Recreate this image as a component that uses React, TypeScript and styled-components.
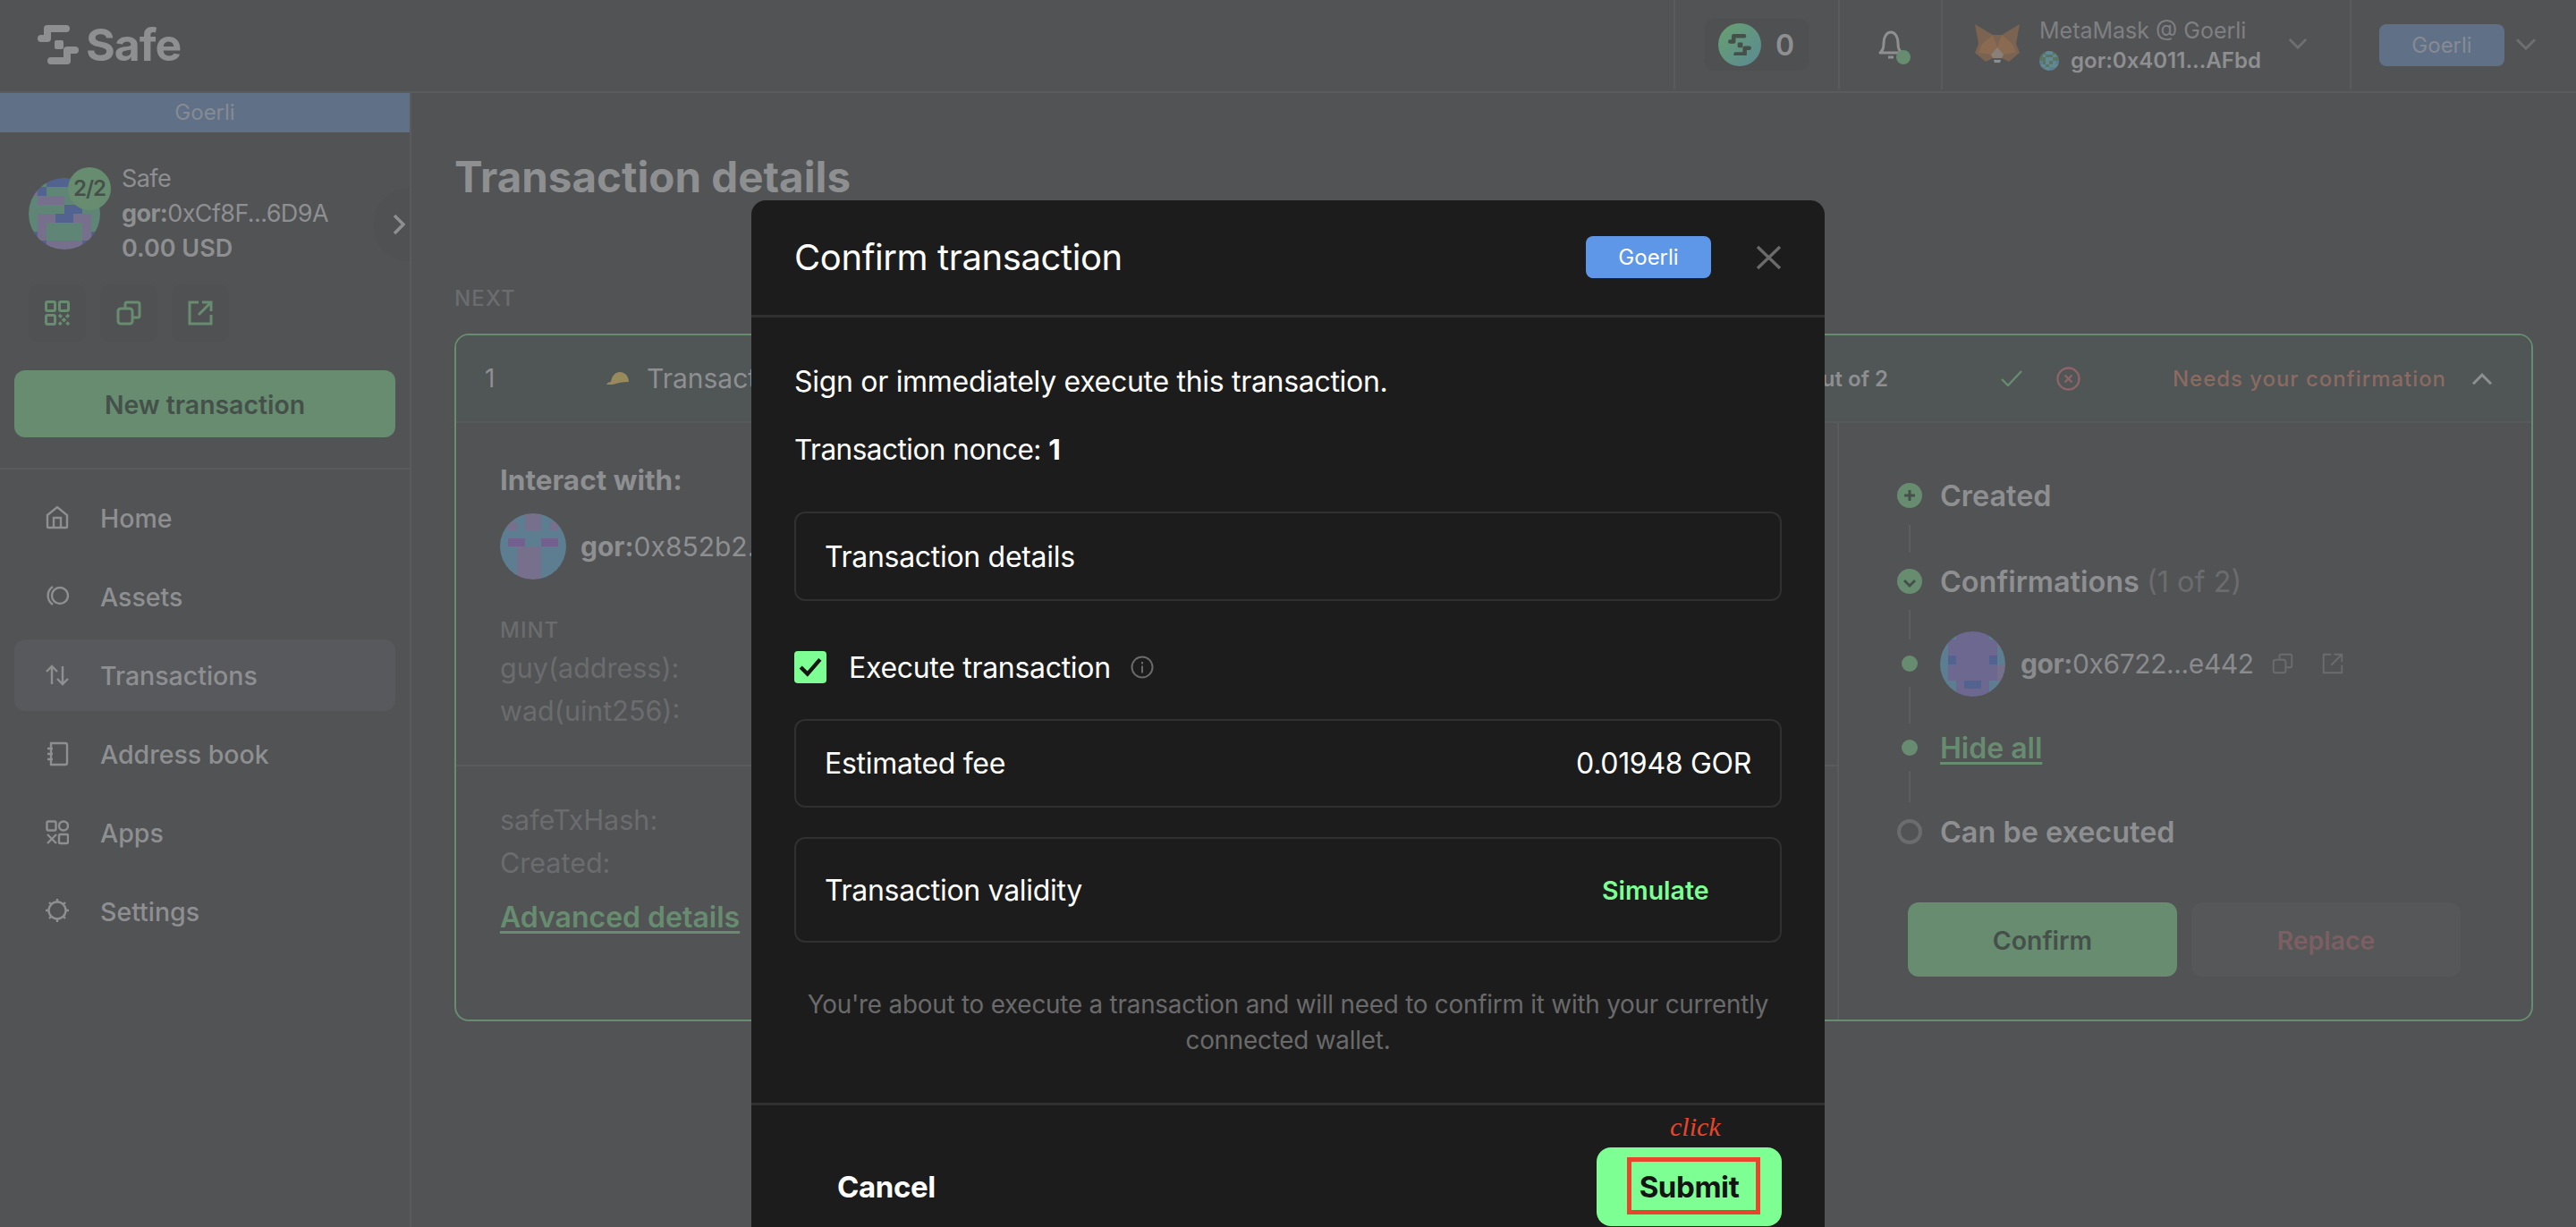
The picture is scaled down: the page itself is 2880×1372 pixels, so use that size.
import React from 'react'
import styled, { createGlobalStyle } from 'styled-components'

const GlobalStyle = createGlobalStyle`
  html, body {
    margin: 0;
    padding: 0;
    background: #525355;
    font-family: Inter, "Open Sans", sans-serif;
  }
  * { box-sizing: border-box; }
`

const TEXT = '#8e8f91'
const FAINT = '#6b6c6e'
const GREEN = '#678c70'
const LINE = '#5a5b5d'

function SafeLogo({ size = 46, color = TEXT }: { size?: number; color?: string }) {
  return (
    <svg width={size} height={size * 44 / 46} viewBox="0 0 46 44" fill="none" stroke={color} strokeWidth="8" strokeLinecap="round" strokeLinejoin="round">
      <path d="M4 15H11V4H32" />
      <path d="M15 40H33V28H42" />
      <rect x="19" y="17" width="10" height="10" rx="2" fill={color} stroke="none" />
    </svg>
  )
}

// blocky identicons, one char per cell
const palette: Record<string, string> = {
  g: '#5f8576', p: '#77708c', b: '#536390', s: '#5d7d90', v: '#74608f', d: '#6d6890', t: '#5f8a94', k: '#5c7560',
}

function PixelAvatar({ rows, size }: { rows: string[]; size: number }) {
  const n = rows.length
  return (
    <AvatarSvg width={size} height={size} viewBox={`0 0 ${n} ${n}`} shapeRendering="crispEdges">
      {rows.map((row, y) =>
        row.split('').map((c, x) => <rect key={`${x}-${y}`} x={x} y={y} width="1" height="1" fill={palette[c]} />)
      )}
    </AvatarSvg>
  )
}

const safeRows = ['ggbbbbgg', 'pbgggggg', 'gpppgggg', 'ggggbbgg', 'gppbbppg', 'gpggggpg', 'bpggggpb', 'bbppppbb']
const contractRows = ['sssppsss', 'spsppsps', 'ssssssss', 'svvssvvs', 'sspppsss', 'sspppsss', 'sspppsss', 'sspppsss']
const ownerRows = ['ssddddss', 'sddddddp', 'sdddddds', 'sbddddbs', 'sddddddp', 'sddddddp', 'ssdbbdss', 'ssddddss']
const walletRows = ['kkttkk', 'ktkkts', 'kkttkk', 'sktkts', 'ttkttt', 'sstsss']

function Fox() {
  return (
    <svg width="50" height="46" viewBox="0 0 50 46">
      <polygon points="0,0 20,12 30,12 50,0 46,22 50,32 38,42 30,38 20,38 12,42 0,32 4,22" fill="#7a6350" />
      <polygon points="8,22 20,12 25,26 18,34 4,32" fill="#8a6b52" />
      <polygon points="42,22 30,12 25,26 32,34 46,32" fill="#8a6b52" />
      <polygon points="18,34 25,26 32,34 30,38 20,38" fill="#8a8078" />
      <polygon points="20,38 30,38 29,44 21,44" fill="#55565a" />
      <polygon points="21,40 29,40 28,43 22,43" fill="#8e8f91" />
    </svg>
  )
}

function Chevron({ up, w = 24, color = TEXT, sw = 3 }: { up?: boolean; w?: number; color?: string; sw?: number }) {
  return (
    <svg width={w} height={w * 0.6} viewBox="0 0 24 14" fill="none" stroke={color} strokeWidth={sw}>
      <path d={up ? 'M2 13L12 3L22 13' : 'M2 1L12 11L22 1'} />
    </svg>
  )
}

function CopyIcon({ size = 28, color = GREEN, sw = 3 }: { size?: number; color?: string; sw?: number }) {
  return (
    <svg width={size} height={size} viewBox="0 0 28 28" fill="none" stroke={color} strokeWidth={sw} strokeLinejoin="round">
      <rect x="2" y="9" width="16" height="17" rx="3" />
      <path d="M10 9V4a2 2 0 0 1 2-2h12a2 2 0 0 1 2 2v13a2 2 0 0 1-2 2h-6" />
    </svg>
  )
}

function OpenIcon({ size = 28, color = GREEN, sw = 3 }: { size?: number; color?: string; sw?: number }) {
  return (
    <svg width={size} height={size} viewBox="0 0 28 28" fill="none" stroke={color} strokeWidth={sw}>
      <path d="M12 2H2V26H26V16" />
      <path d="M26 2L12 16M16 2H26V12" />
    </svg>
  )
}

function QrIcon() {
  return (
    <svg width="28" height="28" viewBox="0 0 28 28" fill="none" stroke={GREEN} strokeWidth="3">
      <rect x="1.5" y="1.5" width="10" height="10" rx="1.5" />
      <rect x="16.5" y="1.5" width="10" height="10" rx="1.5" />
      <rect x="1.5" y="16.5" width="10" height="10" rx="1.5" />
      <path d="M16 16l11 11M27 16L16 27" strokeWidth="3.5" strokeDasharray="4 2" />
    </svg>
  )
}

const navIcons: Record<string, React.ReactNode> = {
  home: <path d="M2 11L13 2l11 9v13a1 1 0 0 1-1 1H3a1 1 0 0 1-1-1zM9 25V14h8v11" />,
  assets: (
    <>
      <circle cx="16" cy="13" r="9" />
      <path d="M8 3a12 12 0 0 0 0 20" />
    </>
  ),
  tx: <path d="M7 24V4M1 10l6-6 6 6M19 4v20M13 18l6 6 6-6" />,
  book: <path d="M6 2h16a2 2 0 0 1 2 2v20a2 2 0 0 1-2 2H6zM2 8h6M2 14h6M2 20h6" />,
  apps: (
    <>
      <rect x="1.5" y="1.5" width="10" height="10" rx="1.5" />
      <circle cx="20" cy="6.5" r="5" />
      <path d="M2 16l10 10M12 16L2 26" />
      <rect x="15" y="16" width="10" height="10" rx="1.5" />
    </>
  ),
  settings: (
    <>
      <circle cx="13" cy="13" r="9.5" />
      <path d="M13 0v3M13 23v3M0 13h3M23 13h3M4 4l2 2M20 20l2 2M22 4l-2 2M4 22l2-2" />
    </>
  ),
}

const navItems = [
  { key: 'home', label: 'Home' },
  { key: 'assets', label: 'Assets' },
  { key: 'tx', label: 'Transactions', active: true },
  { key: 'book', label: 'Address book' },
  { key: 'apps', label: 'Apps' },
  { key: 'settings', label: 'Settings' },
]

export default function App() {
  return (
    <>
      <GlobalStyle />
      <Page>
        <Header>
          <Brand>
            <SafeLogo />
            <BrandName>Safe</BrandName>
          </Brand>
          <HeaderCell $width={184}>
            <TokenPill>
              <TokenCircle>
                <SafeLogo size={26} color="#45504a" />
              </TokenCircle>
              <TokenCount>0</TokenCount>
            </TokenPill>
          </HeaderCell>
          <HeaderCell $width={115}>
            <BellWrap>
              <svg width="28" height="36" viewBox="0 0 28 36" fill="none" stroke={TEXT} strokeWidth="3" strokeLinejoin="round">
                <path d="M2 27c3-3 4-5 4-11 0-6 3-12 8-12s8 6 8 12c0 6 1 8 4 11z" />
                <path d="M11 32h6" />
              </svg>
              <BellDot />
            </BellWrap>
          </HeaderCell>
          <WalletCell>
            <Fox />
            <WalletText>
              <WalletName>MetaMask @ Goerli</WalletName>
              <WalletAddressRow>
                <PixelAvatar rows={walletRows} size={22} />
                <WalletAddress>gor:0x4011...AFbd</WalletAddress>
              </WalletAddressRow>
            </WalletText>
            <Chevron w={22} color="#6e6f71" />
          </WalletCell>
          <NetworkCell>
            <NetworkChip>Goerli</NetworkChip>
            <Chevron w={24} color="#6e6f71" />
          </NetworkCell>
        </Header>

        <Body>
          <Sidebar>
            <NetworkBand>Goerli</NetworkBand>
            <SafeRow>
              <SafeAvatarWrap>
                <PixelAvatar rows={safeRows} size={80} />
                <ThresholdBadge>2/2</ThresholdBadge>
              </SafeAvatarWrap>
              <SafeText>
                <SafeLine>Safe</SafeLine>
                <SafeLine><b>gor:</b>0xCf8F...6D9A</SafeLine>
                <SafeLine $bold>0.00 USD</SafeLine>
              </SafeText>
            </SafeRow>
            <ExpandCircle>
              <svg width="14" height="24" viewBox="0 0 14 24" fill="none" stroke={TEXT} strokeWidth="3.5">
                <path d="M2 2l10 10L2 22" />
              </svg>
            </ExpandCircle>
            <ActionRow>
              <SquareButton><QrIcon /></SquareButton>
              <SquareButton><CopyIcon /></SquareButton>
              <SquareButton><OpenIcon /></SquareButton>
            </ActionRow>
            <NewTxButton>New transaction</NewTxButton>
            <SideDivider />
            <Nav>
              {navItems.map(item => (
                <NavRow key={item.key} $active={item.active}>
                  <svg width="26" height="28" viewBox="0 0 26 28" fill="none" stroke={TEXT} strokeWidth="2.4">
                    {navIcons[item.key]}
                  </svg>
                  <NavLabel>{item.label}</NavLabel>
                </NavRow>
              ))}
            </Nav>
          </Sidebar>

          <Main>
            <PageTitle>Transaction details</PageTitle>
            <SectionLabel>NEXT</SectionLabel>
            <TxCard>
              <TxHeader>
                <TxNonce>1</TxNonce>
                <svg width="25" height="16" viewBox="0 0 25 16">
                  <path d="M0 15c1-2 3-3 5-3 1-7 5-11 10-11 6 0 10 5 10 11-7 0-12 1-18 3z" fill="#998a5c" />
                </svg>
                <TxType>Transaction</TxType>
                <TxCount>1 out of 2</TxCount>
                <StatusIcons>
                  <svg width="24" height="18" viewBox="0 0 24 18" fill="none" stroke={GREEN} strokeWidth="2.4">
                    <path d="M1 10l7 7L23 1" />
                  </svg>
                  <svg width="27" height="27" viewBox="0 0 27 27" fill="none" stroke="#8d6467" strokeWidth="2.4">
                    <circle cx="13.5" cy="13.5" r="12" />
                    <path d="M9.5 9.5l8 8M17.5 9.5l-8 8" />
                  </svg>
                </StatusIcons>
                <TxStatus>Needs your confirmation</TxStatus>
                <Chevron up w={24} />
              </TxHeader>
              <TxBody>
                <TxDetails>
                  <DetailsTop>
                    <InteractLabel>Interact with:</InteractLabel>
                    <AddressRow>
                      <PixelAvatar rows={contractRows} size={74} />
                      <AddressText><b>gor:</b>0x852b2...</AddressText>
                    </AddressRow>
                    <MethodName>MINT</MethodName>
                    <ParamLine>guy(address):</ParamLine>
                    <ParamLine>wad(uint256):</ParamLine>
                  </DetailsTop>
                  <DetailsBottom>
                    <ParamLine>safeTxHash:</ParamLine>
                    <ParamLine>Created:</ParamLine>
                    <AdvancedLink>Advanced details</AdvancedLink>
                  </DetailsBottom>
                </TxDetails>
                <TxSteps>
                  <StepRow $height={96} $lineFrom={33} $lineLen={31}>
                    <StepIconBox>
                      <svg width="28" height="28" viewBox="0 0 28 28">
                        <circle cx="14" cy="14" r="14" fill={GREEN} />
                        <path d="M14 8v12M8 14h12" stroke="#45504a" strokeWidth="3" />
                      </svg>
                    </StepIconBox>
                    <StepTitle>Created</StepTitle>
                  </StepRow>
                  <StepRow $height={96} $lineFrom={32} $lineLen={33}>
                    <StepIconBox>
                      <svg width="28" height="28" viewBox="0 0 28 28" fill="none">
                        <circle cx="14" cy="14" r="14" fill={GREEN} />
                        <path d="M8 13l6 6 6-6" stroke="#45504a" strokeWidth="3" />
                      </svg>
                    </StepIconBox>
                    <StepTitle>Confirmations <StepNote>(1 of 2)</StepNote></StepTitle>
                  </StepRow>
                  <StepRow $height={88} $lineFrom={26} $lineLen={41}>
                    <StepIconBox><StepDot /></StepIconBox>
                    <PixelAvatar rows={ownerRows} size={73} />
                    <OwnerAddress><b>gor:</b>0x6722...e442</OwnerAddress>
                    <CopyIcon size={24} color={FAINT} sw={2.2} />
                    <OwnerLink><OpenIcon size={24} color={FAINT} sw={2.2} /></OwnerLink>
                  </StepRow>
                  <StepRow $height={100} $lineFrom={26} $lineLen={35}>
                    <StepIconBox><StepDot /></StepIconBox>
                    <HideAll>Hide all</HideAll>
                  </StepRow>
                  <StepRow $height={88}>
                    <StepIconBox><StepRing /></StepIconBox>
                    <StepTitle>Can be executed</StepTitle>
                  </StepRow>
                  <StepButtons>
                    <ConfirmButton>Confirm</ConfirmButton>
                    <ReplaceButton>Replace</ReplaceButton>
                  </StepButtons>
                </TxSteps>
              </TxBody>
            </TxCard>
          </Main>
        </Body>

        <Modal>
          <ModalHeader>
            <ModalTitle>Confirm transaction</ModalTitle>
            <ModalChip>Goerli</ModalChip>
            <CloseButton>
              <svg width="29" height="28" viewBox="0 0 29 28" fill="none" stroke="#6a6a6a" strokeWidth="3.4">
                <path d="M2 2l25 24M27 2L2 26" />
              </svg>
            </CloseButton>
          </ModalHeader>
          <ModalBody>
            <ModalLine $top={50}>Sign or immediately execute this transaction.</ModalLine>
            <ModalLine $top={32} $tight>Transaction nonce: <b>1</b></ModalLine>
            <InfoBox $top={47} $height={100}>Transaction details</InfoBox>
            <CheckRow>
              <CheckBox>
                <svg width="26" height="22" viewBox="0 0 24 20" fill="none" stroke="#141414" strokeWidth="4">
                  <path d="M2 10l7 7L22 2" />
                </svg>
              </CheckBox>
              <CheckLabel>Execute transaction</CheckLabel>
              <svg width="26" height="26" viewBox="0 0 26 26" fill="none" stroke="#6a6a6a" strokeWidth="2">
                <circle cx="13" cy="13" r="11.5" />
                <path d="M13 11.5v8M13 7v2.4" />
              </svg>
            </CheckRow>
            <InfoBox $top={40} $height={99}>
              <span>Estimated fee</span>
              <span>0.01948 GOR</span>
            </InfoBox>
            <InfoBox $top={33} $height={118}>
              <span>Transaction validity</span>
              <SimulateLink>Simulate</SimulateLink>
            </InfoBox>
            <Disclaimer>You're about to execute a transaction and will need to confirm it with your currently connected wallet.</Disclaimer>
          </ModalBody>
          <ModalFooter>
            <CancelButton>Cancel</CancelButton>
            <SubmitWrap>
              <ClickNote>click</ClickNote>
              <SubmitButton>
                Submit
                <RedFrame />
              </SubmitButton>
            </SubmitWrap>
          </ModalFooter>
        </Modal>
      </Page>
    </>
  )
}

const Page = styled.div`
  position: relative;
  width: 2880px;
  height: 1372px;
  overflow: hidden;
  background: #525355;
  color: ${TEXT};
`

const AvatarSvg = styled.svg`
  display: block;
  flex: none;
  border-radius: 50%;
`

/* top bar */
const Header = styled.header`
  display: flex;
  align-items: stretch;
  height: 104px;
  padding-bottom: 2px;
  border-bottom: 2px solid ${LINE};
`

const Brand = styled.div`
  display: flex;
  align-items: center;
  gap: 8px;
  padding-left: 42px;
  margin-right: auto;
`

const BrandName = styled.span`
  font-size: 50px;
  font-weight: 700;
  letter-spacing: -1px;
`

const HeaderCell = styled.div<{ $width: number }>`
  display: flex;
  align-items: center;
  justify-content: center;
  width: ${p => p.$width}px;
  border-left: 2px solid ${LINE};
`

const TokenPill = styled.div`
  display: flex;
  align-items: center;
  gap: 16px;
  width: 118px;
  height: 58px;
  padding-left: 16px;
  border-radius: 12px;
  background: #4f5052;
`

const TokenCircle = styled.div`
  display: flex;
  align-items: center;
  justify-content: center;
  width: 48px;
  height: 48px;
  border-radius: 50%;
  background: linear-gradient(135deg, #67a06f, #5b8a94);
`

const TokenCount = styled.span`
  font-size: 32px;
  font-weight: 600;
`

const BellWrap = styled.div`
  position: relative;
  display: flex;
  height: 36px;
`

const BellDot = styled.span`
  position: absolute;
  right: -8px;
  bottom: -4px;
  width: 16px;
  height: 16px;
  border-radius: 50%;
  background: ${GREEN};
`

const WalletCell = styled.div`
  display: flex;
  align-items: center;
  width: 457px;
  padding-left: 36px;
  border-left: 2px solid ${LINE};
`

const WalletText = styled.div`
  display: flex;
  flex-direction: column;
  gap: 2px;
  width: 278px;
  margin-left: 22px;
`

const WalletName = styled.span`
  font-size: 25px;
  line-height: 32px;
  padding-top: 1px;
  color: #7f8082;
`

const WalletAddressRow = styled.div`
  display: flex;
  align-items: center;
  gap: 13px;
`

const WalletAddress = styled.span`
  font-size: 24px;
  line-height: 32px;
  font-weight: 600;
`

const NetworkCell = styled.div`
  display: flex;
  align-items: center;
  gap: 12px;
  width: 253px;
  padding-left: 31px;
  border-left: 2px solid ${LINE};
`

const NetworkChip = styled.div`
  display: flex;
  align-items: center;
  justify-content: center;
  width: 140px;
  height: 47px;
  border-radius: 8px;
  background: #607087;
  font-size: 24px;
  color: #868b93;
`

const Body = styled.div`
  display: flex;
  height: 1268px;
`

/* left column */
const Sidebar = styled.aside`
  position: relative;
  flex: none;
  width: 460px;
  overflow: hidden;
  border-right: 2px solid ${LINE};
`

const NetworkBand = styled.div`
  height: 44px;
  line-height: 44px;
  text-align: center;
  font-size: 24px;
  background: #607087;
  color: #868b93;
`

const SafeRow = styled.div`
  display: flex;
  gap: 24px;
  margin-top: 32px;
  padding-left: 32px;
`

const SafeAvatarWrap = styled.div`
  position: relative;
  flex: none;
  width: 80px;
  height: 80px;
  margin-top: 19px;
`

const ThresholdBadge = styled.span`
  position: absolute;
  top: -12px;
  left: 44px;
  width: 48px;
  height: 48px;
  line-height: 48px;
  border-radius: 50%;
  text-align: center;
  font-size: 24px;
  font-weight: 600;
  letter-spacing: -1px;
  color: #45504a;
  background: ${GREEN};
`

const SafeText = styled.div`
  display: flex;
  flex-direction: column;
`

const SafeLine = styled.div<{ $bold?: boolean }>`
  font-size: 27px;
  line-height: 39px;
  letter-spacing: ${p => (p.$bold ? '0' : '-0.6px')};
  font-weight: ${p => (p.$bold ? 600 : 400)};
`

const ExpandCircle = styled.div`
  position: absolute;
  top: 106px;
  right: -41px;
  display: flex;
  align-items: center;
  width: 82px;
  height: 82px;
  padding-left: 22px;
  border-radius: 50%;
  background: #505153;
`

const ActionRow = styled.div`
  display: flex;
  gap: 16px;
  margin-top: 21px;
  padding-left: 32px;
`

const SquareButton = styled.div`
  display: flex;
  align-items: center;
  justify-content: center;
  width: 64px;
  height: 64px;
  border-radius: 12px;
  background: #505153;
`

const NewTxButton = styled.div`
  height: 75px;
  margin: 32px 16px 34px;
  line-height: 77px;
  text-align: center;
  border-radius: 12px;
  background: ${GREEN};
  color: #45504a;
  font-size: 28.4px;
  font-weight: 600;
`

const SideDivider = styled.div`
  height: 2px;
  background: ${LINE};
`

const Nav = styled.nav`
  display: flex;
  flex-direction: column;
  gap: 8px;
  margin: 14px 16px 0;
`

const NavRow = styled.div<{ $active?: boolean }>`
  display: flex;
  align-items: center;
  gap: 35px;
  height: 80px;
  padding-left: 35px;
  border-radius: 12px;
  background: ${p => (p.$active ? '#58595d' : 'transparent')};
`

const NavLabel = styled.span`
  font-size: 28.5px;
  font-weight: 500;
`

/* page body */
const Main = styled.main`
  flex: 1;
  padding: 64px 48px 0;
`

const PageTitle = styled.h1`
  margin: 0;
  font-size: 47.5px;
  line-height: 60px;
  font-weight: 700;
`

const SectionLabel = styled.div`
  margin-top: 94px;
  font-size: 24px;
  line-height: 24px;
  letter-spacing: 1.2px;
  font-weight: 500;
  color: ${FAINT};
`

const TxCard = styled.section`
  display: flex;
  flex-direction: column;
  height: 769px;
  margin-top: 27px;
  border: 2px solid ${GREEN};
  border-radius: 16px;
  overflow: hidden;
`

const TxHeader = styled.div`
  display: flex;
  align-items: center;
  flex: none;
  height: 98px;
  padding: 0 43px 0 32px;
  background: #505556;
  border-bottom: 2px solid #565a5a;
`

const TxNonce = styled.span`
  width: 136px;
  font-size: 28px;
`

const TxType = styled.span`
  flex: 1;
  margin-left: 20px;
  font-size: 30px;
`

const TxCount = styled.span`
  font-size: 24px;
  font-weight: 600;
`

const StatusIcons = styled.div`
  display: flex;
  align-items: center;
  gap: 38px;
  margin: 0 103px 0 126px;
`

const TxStatus = styled.span`
  margin-right: 28px;
  font-size: 24px;
  font-weight: 500;
  letter-spacing: 0.95px;
  color: #8b6a62;
`

const TxBody = styled.div`
  display: flex;
  flex: 1;
`

const TxDetails = styled.div`
  flex: none;
  width: 1546px;
  border-right: 2px solid ${LINE};
`

const DetailsTop = styled.div`
  height: 384px;
  padding: 46px 0 0 49px;
  border-bottom: 2px solid ${LINE};
`

const DetailsBottom = styled.div`
  padding: 36px 0 0 49px;
`

const InteractLabel = styled.div`
  font-size: 31.5px;
  line-height: 36px;
  font-weight: 700;
`

const AddressRow = styled.div`
  display: flex;
  align-items: center;
  gap: 16px;
  margin-top: 19px;
`

const AddressText = styled.span`
  font-size: 30px;
`

const MethodName = styled.div`
  margin: 45px 0 6px;
  font-size: 24px;
  line-height: 24px;
  letter-spacing: 1px;
  font-weight: 500;
  color: ${FAINT};
`

const ParamLine = styled.div`
  font-size: 30.5px;
  line-height: 48px;
  color: ${FAINT};
`

const AdvancedLink = styled.div`
  margin-top: 17px;
  font-size: 32px;
  line-height: 40px;
  font-weight: 600;
  color: ${GREEN};
  text-decoration: underline;
  text-underline-offset: 4px;
`

const TxSteps = styled.div`
  flex: 1;
  padding: 33px 0 0 65px;
`

const StepRow = styled.div<{ $height: number; $lineFrom?: number; $lineLen?: number }>`
  position: relative;
  display: flex;
  align-items: center;
  height: ${p => p.$height}px;

  ${p =>
    p.$lineFrom
      ? `&::after {
    content: '';
    position: absolute;
    left: 13px;
    top: calc(50% + ${p.$lineFrom}px);
    width: 2px;
    height: ${p.$lineLen}px;
    background: #5d5e60;
  }`
      : ''}
`

const StepIconBox = styled.div`
  display: flex;
  align-items: center;
  justify-content: center;
  flex: none;
  width: 28px;
  height: 28px;
  margin-right: 20px;
`

const StepDot = styled.span`
  width: 18px;
  height: 18px;
  border-radius: 50%;
  background: ${GREEN};
`

const StepRing = styled.span`
  width: 28px;
  height: 28px;
  border-radius: 50%;
  border: 4px solid #6b6c6e;
`

const StepTitle = styled.span`
  font-size: 32.4px;
  font-weight: 600;
`

const StepNote = styled.span`
  font-weight: 400;
  color: ${FAINT};
`

const OwnerAddress = styled.span`
  margin: 0 20px 0 17px;
  font-size: 30px;
  letter-spacing: -0.4px;
  color: #8a8b8d;
`

const OwnerLink = styled.span`
  display: flex;
  margin-left: 32px;
`

const HideAll = styled.span`
  font-size: 32px;
  font-weight: 600;
  color: ${GREEN};
  text-decoration: underline;
  text-underline-offset: 4px;
`

const StepButtons = styled.div`
  display: flex;
  gap: 16px;
  margin: 35px 0 0 12px;
`

const ConfirmButton = styled.div`
  width: 301px;
  height: 83px;
  line-height: 85px;
  text-align: center;
  border-radius: 12px;
  background: ${GREEN};
  color: #45504a;
  font-size: 28.4px;
  font-weight: 600;
`

const ReplaceButton = styled(ConfirmButton)`
  background: #565759;
  color: #7c5f62;
`

/* dialog on top of the dimmed page */
const Modal = styled.div`
  position: absolute;
  top: 224px;
  left: 840px;
  width: 1200px;
  height: 1180px;
  border-radius: 16px;
  background: #1c1c1c;
  color: #fff;
`

const ModalHeader = styled.div`
  display: flex;
  align-items: center;
  height: 131px;
  padding: 0 48px 1px;
  border-bottom: 3px solid #303030;
`

const ModalTitle = styled.h2`
  flex: 1;
  margin: 0;
  font-size: 40px;
  font-weight: 400;
  letter-spacing: -0.4px;
`

const ModalChip = styled.div`
  width: 140px;
  height: 47px;
  line-height: 47px;
  text-align: center;
  border-radius: 8px;
  background: #5f97e8;
  font-size: 24px;
`

const CloseButton = styled.div`
  display: flex;
  margin-left: 50px;
`

const ModalBody = styled.div`
  padding: 0 48px;
`

const ModalLine = styled.p<{ $top: number; $tight?: boolean }>`
  margin: ${p => p.$top}px 0 0;
  font-size: ${p => (p.$tight ? 31.5 : 32)}px;
  line-height: 44px;
  letter-spacing: ${p => (p.$tight ? '-0.5px' : '-0.3px')};

  b {
    font-weight: 700;
  }
`

const InfoBox = styled.div<{ $top: number; $height: number }>`
  display: flex;
  align-items: center;
  justify-content: space-between;
  height: ${p => p.$height}px;
  margin-top: ${p => p.$top}px;
  padding: 0 32px;
  border: 2px solid #303030;
  border-radius: 12px;
  font-size: 32px;
  letter-spacing: -0.3px;
`

const CheckRow = styled.div`
  display: flex;
  align-items: center;
  height: 36px;
  margin-top: 56px;
`

const CheckBox = styled.div`
  display: flex;
  align-items: center;
  justify-content: center;
  width: 36px;
  height: 36px;
  border-radius: 4px;
  background: #7dff93;
`

const CheckLabel = styled.span`
  margin: 0 22px 0 25px;
  font-size: 32px;
  letter-spacing: -0.3px;
`

const SimulateLink = styled.span`
  width: 167px;
  font-size: 28.5px;
  font-weight: 600;
  letter-spacing: 0;
  color: #7dff93;
`

const Disclaimer = styled.p`
  margin: 49px auto 0;
  width: 1104px;
  text-align: center;
  font-size: 27.8px;
  line-height: 40px;
  letter-spacing: -0.2px;
  color: #6a6a6a;
`

const ModalFooter = styled.div`
  position: relative;
  display: flex;
  justify-content: space-between;
  margin-top: 50px;
  padding: 47px 48px 0;
  border-top: 3px solid #303030;
`

const CancelButton = styled.div`
  height: 88px;
  line-height: 88px;
  padding-left: 48px;
  font-size: 33px;
  font-weight: 700;
  letter-spacing: -0.4px;
`

const SubmitWrap = styled.div`
  position: relative;
`

const ClickNote = styled.span`
  position: absolute;
  top: -43px;
  left: 82px;
  font-family: "Liberation Serif", serif;
  font-style: italic;
  font-size: 30px;
  line-height: 40px;
  color: #e8452c;
`

const SubmitButton = styled.div`
  position: relative;
  width: 207px;
  height: 88px;
  line-height: 88px;
  text-align: center;
  border-radius: 16px;
  background: #7dff93;
  color: #141414;
  font-size: 33px;
  font-weight: 700;
  letter-spacing: -0.4px;
`

const RedFrame = styled.span`
  position: absolute;
  top: 11px;
  left: 34px;
  width: 149px;
  height: 64px;
  border: 5px solid #e8452c;
`
